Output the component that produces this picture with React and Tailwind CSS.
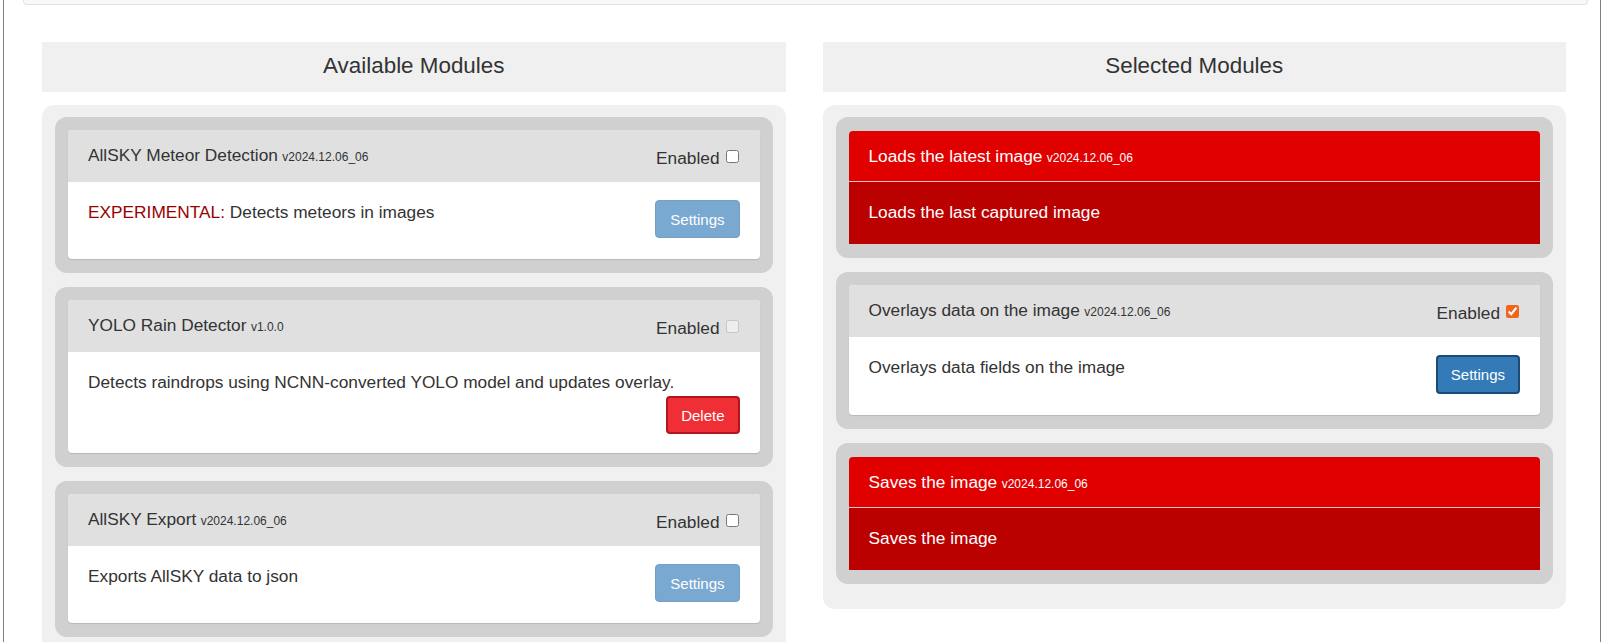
const available = [
  {
    name: "AllSKY Meteor Detection",
    version: "v2024.12.06_06",
    tag: "EXPERIMENTAL",
    desc: "Detects meteors in images",
    action: "settings",
  },
  {
    name: "YOLO Rain Detector",
    version: "v1.0.0",
    desc: "Detects raindrops using NCNN-converted YOLO model and updates overlay.",
    action: "delete",
    locked: true,
  },
  {
    name: "AllSKY Export",
    version: "v2024.12.06_06",
    desc: "Exports AllSKY data to json",
    action: "settings",
  },
];

const selected = [
  { core: true, name: "Loads the latest image", version: "v2024.12.06_06", desc: "Loads the last captured image" },
  {
    name: "Overlays data on the image",
    version: "v2024.12.06_06",
    desc: "Overlays data fields on the image",
    action: "settings-active",
    checked: true,
  },
  { core: true, name: "Saves the image", version: "v2024.12.06_06", desc: "Saves the image" },
];

const Button = ({ kind }) => {
  if (kind === "delete") {
    return (
      <button className="h-[38px] px-[13px] rounded-[4px] border-2 border-[#b0161b] bg-[#ef2f35] text-white text-[15px] leading-none">
        Delete
      </button>
    );
  }
  if (kind === "settings-active") {
    return (
      <button className="h-[39px] px-[13px] rounded-[4px] border-2 border-[#1c4a73] bg-[#337ab7] text-white text-[15px] leading-none">
        Settings
      </button>
    );
  }
  return (
    <button className="h-[38px] px-[14px] rounded-[4px] border border-[#2e6da4] bg-[#337ab7] text-white text-[15px] leading-none opacity-65">
      Settings
    </button>
  );
};

const Title = ({ m }) => (
  <div className="h-[25px] leading-[25px] whitespace-nowrap">
    <span className="text-[17.3px]">{m.name}</span>{" "}
    <span className="text-[12px] leading-none">{m.version}</span>
  </div>
);

const ModuleCard = ({ m }) => {
  if (m.core) {
    return (
      <div className="rounded-[12px] bg-[#d0d0d0] px-[13px] pt-[14px] pb-[14px]">
        <div className="rounded-t-[4px] overflow-hidden text-white">
          <div className="bg-[#e00000] px-5 pt-[13px] pb-[12px] border-b border-[#f0c4c4]">
            <Title m={m} />
          </div>
          <div className="bg-[#bb0000] px-5 pt-[18px] pb-[19px] text-[17.3px] leading-[25px]">{m.desc}</div>
        </div>
      </div>
    );
  }

  const stacked = m.action === "delete";

  return (
    <div className="rounded-[12px] bg-[#d0d0d0] px-[13px] pt-[13px] pb-[14px]">
      <div className="rounded-[4px] overflow-hidden bg-white shadow-[0_1px_1px_rgba(0,0,0,0.12)] text-[#333]">
        <div className="flex justify-between items-start bg-[#e0e0e0] pl-5 pr-[21px] pt-[13px] pb-[14px]">
          <Title m={m} />
          <label className="flex items-start h-[25px] mt-[3px] -mb-[3px] text-[17.3px] leading-[25px]">
            Enabled
            <input
              type="checkbox"
              readOnly
              checked={!!m.checked}
              disabled={!!m.locked}
              className="ml-[6px] mr-0 mb-0 mt-[3.5px] w-[13px] h-[13px] accent-[#f0661c]"
            />
          </label>
        </div>
        {stacked ? (
          <div className="px-5 pt-[18px] pb-[19px]">
            <p className="text-[17.3px] leading-[25px]">{m.desc}</p>
            <div className="flex justify-end mt-[1px]">
              <Button kind={m.action} />
            </div>
          </div>
        ) : (
          <div className="flex justify-between items-start px-5 pt-[18px] pb-[21px]">
            <p className="text-[17.3px] leading-[25px]">
              {m.tag && <span className="text-[#990000]">{m.tag}:</span>}
              {m.tag && " "}
              {m.desc}
            </p>
            <Button kind={m.action} />
          </div>
        )}
      </div>
    </div>
  );
};

const Column = ({ title, modules }) => (
  <div>
    <div className="h-[50px] flex items-center justify-center bg-[#f0f0f0] text-[#333] text-[22.4px] pb-[2px]">
      {title}
    </div>
    <div className="mt-[13px] rounded-[12px] bg-[#f0f0f0] px-[13px] pt-[12px] pb-[25px] flex flex-col gap-[14px]">
      {modules.map((m) => (
        <ModuleCard key={m.name} m={m} />
      ))}
    </div>
  </div>
);

export default function App() {
  return (
    <div className="h-[642px] overflow-hidden bg-white" style={{ fontFamily: '"Liberation Sans", Arial, sans-serif' }}>
      <div className="ml-[3px] w-[1598px] min-h-[642px] border-x border-[#808080]">
        <div className="ml-[19px] w-[1565px] h-[5px] bg-[#f8f8f8] border-x border-b border-[#e3e3e3] rounded-b-[4px]" />
        <div className="mt-[37px] ml-[38px] w-[1524px] grid grid-cols-2 gap-[37px] items-start">
          <Column title="Available Modules" modules={available} />
          <Column title="Selected Modules" modules={selected} />
        </div>
      </div>
    </div>
  );
}
